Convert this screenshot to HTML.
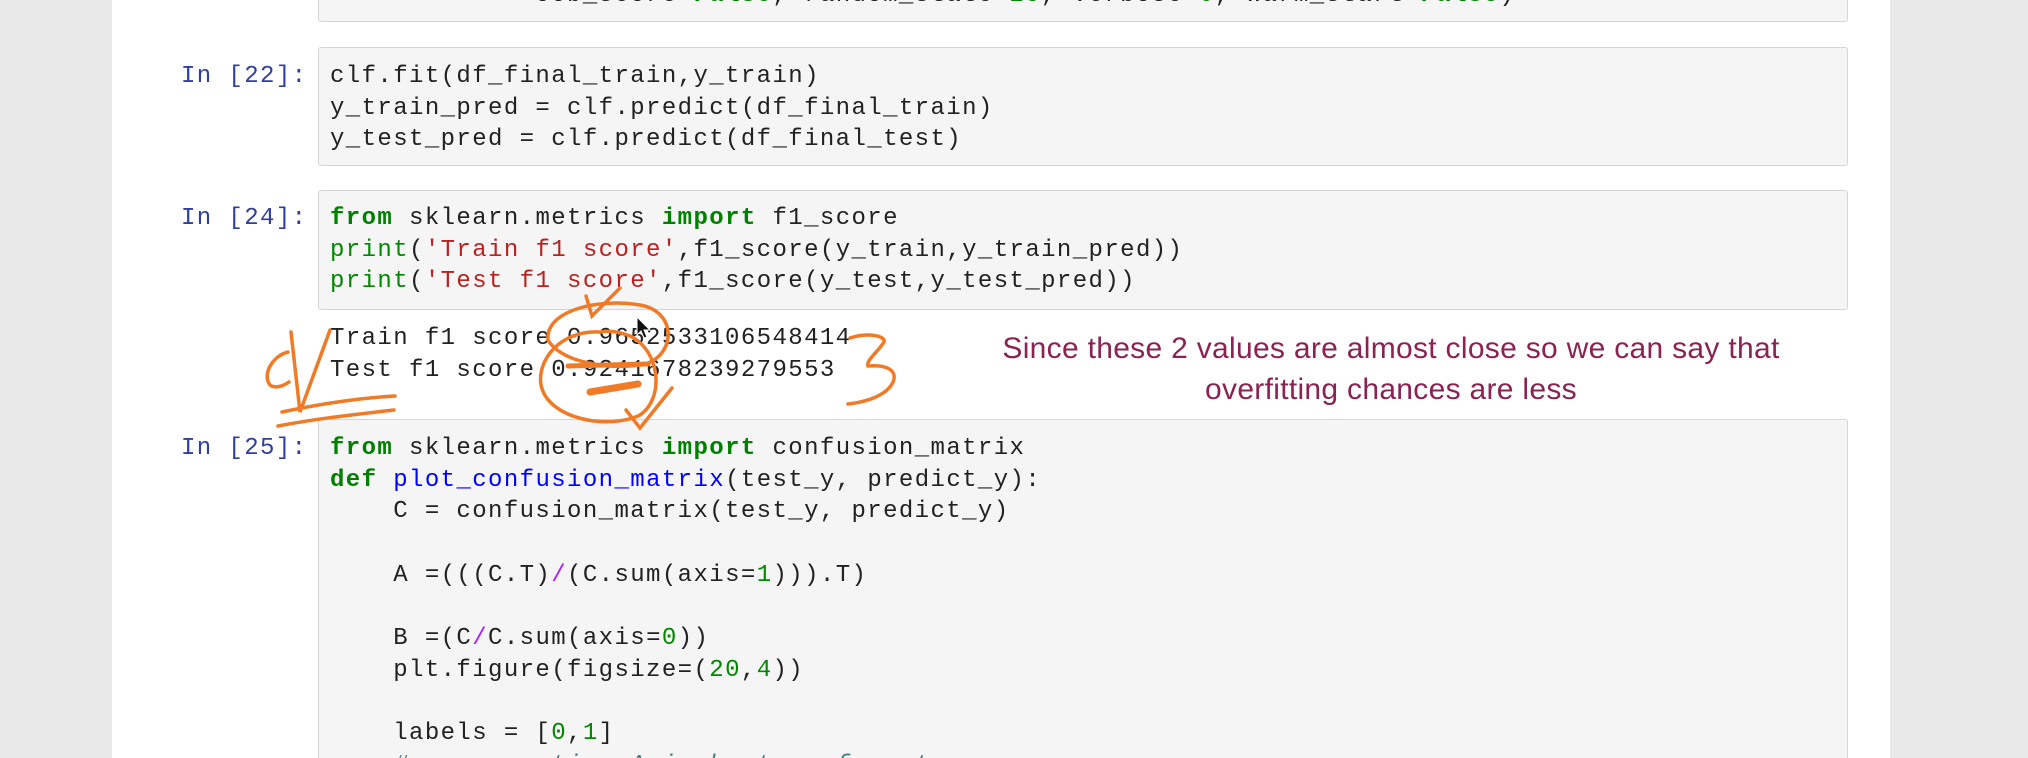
<!DOCTYPE html>
<html style="overflow:hidden;height:758px"><head><meta charset="utf-8"><style>
html,body{margin:0;padding:0}
body{width:2028px;height:758px;background:#e9e9e9;position:relative;overflow:hidden;font-family:"Liberation Mono",monospace}
.page{position:absolute;left:112px;top:0;width:1778px;height:758px;background:#fff}
.box{position:absolute;left:318px;width:1530px;background:#f5f5f5;border:1.5px solid #d5d5d5;border-radius:3px;box-sizing:border-box}
pre{margin:0;position:absolute;left:330px;font-family:"Liberation Mono",monospace;font-size:24px;letter-spacing:1.4px;line-height:31.7px;color:#222;white-space:pre}
.p{position:absolute;left:181px;font-family:"Liberation Mono",monospace;font-size:24px;letter-spacing:1.4px;color:#303f9f;line-height:31.7px}
.k{color:#008000;font-weight:bold}.s{color:#ba2121}.f{color:#0000ff}.n{color:#008800}.o{color:#aa22ff}
.note{position:absolute;left:900px;width:982px;top:328px;text-align:center;font-family:"Liberation Sans Narrow","Liberation Sans",sans-serif;font-size:30px;line-height:41px;color:#8b2252;letter-spacing:0.3px}
</style></head><body>
<div class="page"></div>
<div class="box" style="top:-10px;height:32px"></div>
<pre style="top:-20px">             oob_score=<span class="k">False</span>, random_state=<span class="n">25</span>, verbose=<span class="n">0</span>, warm_start=<span class="k">False</span>)</pre>

<div class="box" style="top:47px;height:119px"></div>
<div class="p" style="top:61px">In [22]:</div>
<pre style="top:61px">clf.fit(df_final_train,y_train)
y_train_pred = clf.predict(df_final_train)
y_test_pred = clf.predict(df_final_test)</pre>

<div class="box" style="top:190px;height:120px"></div>
<div class="p" style="top:203px">In [24]:</div>
<pre style="top:203px"><span class="k">from</span> sklearn.metrics <span class="k">import</span> f1_score
<span class="n">print</span>(<span class="s">'Train f1 score'</span>,f1_score(y_train,y_train_pred))
<span class="n">print</span>(<span class="s">'Test f1 score'</span>,f1_score(y_test,y_test_pred))</pre>
<pre style="top:323px">Train f1 score 0.9652533106548414
Test f1 score 0.9241678239279553</pre>

<div class="note">Since these 2 values are almost close so we can say that<br>overfitting chances are less</div>

<div class="box" style="top:419px;height:345px"></div>
<div class="p" style="top:433px">In [25]:</div>
<pre style="top:433px"><span class="k">from</span> sklearn.metrics <span class="k">import</span> confusion_matrix
<span class="k">def</span> <span class="f">plot_confusion_matrix</span>(test_y, predict_y):
    C = confusion_matrix(test_y, predict_y)

    A =(((C.T)<span class="o">/</span>(C.sum(axis=<span class="n">1</span>))).T)

    B =(C<span class="o">/</span>C.sum(axis=<span class="n">0</span>))
    plt.figure(figsize=(<span class="n">20</span>,<span class="n">4</span>))

    labels = [<span class="n">0</span>,<span class="n">1</span>]
    <span style="color:#408080;font-style:italic"># representing A in heatmap format</span></pre>

<svg width="2028" height="758" style="position:absolute;left:0;top:0" fill="none" stroke="#f07a26" stroke-width="3.5" stroke-linecap="round">
<path d="M548 340 C545 310 600 298 640 305 C680 312 675 360 640 365 C600 370 560 360 548 340 Z"/>
<path d="M600 332 C560 330 537 360 541 385 C548 420 610 430 640 415 C665 398 660 350 630 336 C615 330 605 331 600 332"/>
<path d="M586 296 L592 316 L620 288"/>
<path d="M626 410 L640 428 L672 388"/>
<path d="M590 392 L638 384" stroke-width="7"/>
<path d="M568 366 L648 364" stroke-width="5"/>
<path d="M288 352 C272 356 262 375 270 385 C275 389 283 386 289 382"/>
<path d="M291 332 L300 412 L330 330"/>
<path d="M282 412 C320 404 360 398 395 396"/>
<path d="M278 426 C320 418 360 414 394 410"/>
<path d="M850 338 C868 332 886 336 884 342 C878 352 866 360 868 366 C892 364 898 374 892 384 C885 396 866 402 848 404"/>
</svg>
<svg width="20" height="26" style="position:absolute;left:635px;top:315px"><path d="M2 2 L2 20 L6 16 L9 23 L12 22 L9 15 L15 15 Z" fill="#111" stroke="#fff" stroke-width="1"/></svg>
</body></html>
